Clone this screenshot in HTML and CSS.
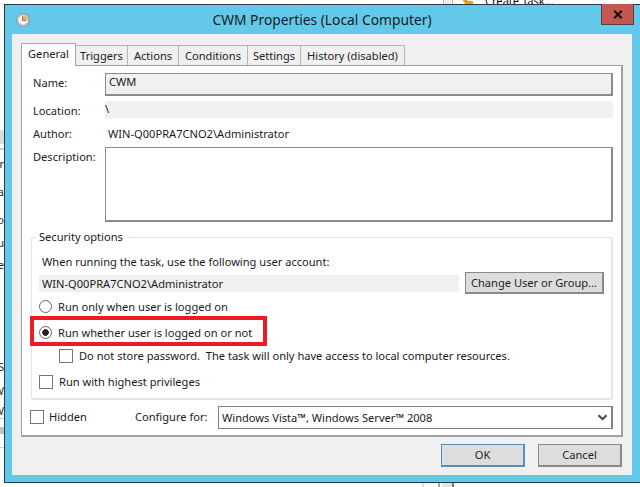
FILE: index.html
```html
<!DOCTYPE html>
<html lang="en">
<head>
<meta charset="utf-8">
<title>CWM Properties</title>
<link rel="stylesheet" href="styles.css">
</head>
<body>
<div class="desktop">
  <div class="behind-top">
    <span class="scroll-bit"></span>
    <svg class="task-icon" width="12" height="6" viewBox="0 0 12 6"><path d="M1 0h4l1 2h5v4H4L1 2z" fill="#e8a020"/></svg>
    <span class="behind-title">Create Task...</span>
  </div>
  <div class="behind-left">
    <i class="bl bl-band"></i><i class="bl bl-line1"></i>
    <b class="frag f1">r</b><b class="frag f2">a</b><b class="frag f3">o</b><b class="frag f4">u</b><b class="frag f5">e</b>
    <b class="frag f6">S</b><b class="frag f7">W</b><b class="frag f8">W</b>
    <i class="bl bl-line2"></i><i class="bl bl-dot"></i><i class="bl bl-line3"></i>
  </div>
  <div class="behind-bottom"><i></i><i></i><i></i><i></i></div>

  <div class="window">
    <header class="titlebar">
      <svg class="app-icon" width="14" height="14" viewBox="0 0 14 14">
        <circle cx="7" cy="7" r="6.3" fill="#c9ccd0" stroke="#8f949a"/>
        <circle cx="7" cy="7" r="4.4" fill="#f7f7f7"/>
        <path d="M7 7V2.6A4.4 4.4 0 0 1 11.4 7z" fill="#f0b050"/>
        <path d="M6.5 3.4V7.5H10" fill="none" stroke="#777" stroke-width="1"/>
      </svg>
      <span class="title">CWM Properties (Local Computer)</span>
      <div class="close">
        <svg width="10" height="9" viewBox="0 0 10 9"><path d="M1.2.8 8.8 8.2M8.8.8 1.2 8.2" stroke="#111" stroke-width="2.2" fill="none"/></svg>
      </div>
    </header>
    <main class="client">
      <nav class="tabs">
        <span class="tab active">General</span>
        <span class="tab t-triggers">Triggers</span>
        <span class="tab t-actions">Actions</span>
        <span class="tab t-conditions">Conditions</span>
        <span class="tab t-settings">Settings</span>
        <span class="tab t-history">History (disabled)</span>
      </nav>
      <section class="panel">
        <div class="form">
          <label class="lbl name-lbl">Name:</label>
          <div class="field name-field">CWM</div>
          <label class="lbl shifted">Location:</label>
          <div class="readonly">\</div>
          <label class="lbl shifted">Author:</label>
          <div class="author">WIN-Q00PRA7CNO2\Administrator</div>
          <label class="lbl desc-lbl">Description:</label>
          <div class="field desc-field"></div>
        </div>
        <div class="group">
          <span class="legend">Security options</span>
          <div class="account-label">When running the task, use the following user account:</div>
          <div class="account-row">
            <div class="account">WIN-Q00PRA7CNO2\Administrator</div>
            <button class="btn change">Change User or Group...</button>
          </div>
          <div class="opt opt-1"><input type="radio" name="r"><span>Run only when user is logged on</span></div>
          <div class="opt opt-2"><input type="radio" name="r" checked><span>Run whether user is logged on or not</span></div>
          <div class="opt opt-3"><input type="checkbox"><span>Do not store password.&nbsp; The task will only have access to local computer resources.</span></div>
          <div class="opt opt-4"><input type="checkbox"><span>Run with highest privileges</span></div>
          <div class="highlight"></div>
        </div>
        <div class="bottom-row">
          <div class="hidden-opt"><input type="checkbox"><span>Hidden</span></div>
          <span class="cfg-label">Configure for:</span>
          <div class="select">
            <span>Windows Vista™, Windows Server™ 2008</span>
            <svg width="11" height="7" viewBox="0 0 11 7"><path d="M1.5 1.2 5.5 5.2 9.5 1.2" stroke="#444" stroke-width="2" fill="none"/></svg>
          </div>
        </div>
      </section>
      <footer class="actions">
        <button class="btn ok">OK</button>
        <button class="btn cancel">Cancel</button>
      </footer>
    </main>
  </div>
</div>
</body>
</html>
```
FILE: styles.css
```css
* { box-sizing: border-box; }
html, body { margin: 0; padding: 0; }
body {
  width: 640px; height: 487px; overflow: hidden; background: #fff;
  font-family: "Noto Sans", "Open Sans", sans-serif; font-size: 11.1px; color: #1a1a1a;
}
.desktop { position: relative; width: 640px; height: 487px; overflow: hidden; }

/* fragments of the window behind the dialog */
.behind-top { position: absolute; left: 443px; top: 0; width: 150px; height: 4px; overflow: hidden; }
.scroll-bit { position: absolute; left: 0; top: 0; width: 10px; height: 4px; background: #eee; border: 1px solid #bbb; border-width: 0 1px; }
.task-icon { position: absolute; left: 19px; top: -1px; }
.behind-title { position: absolute; left: 42px; top: -7px; white-space: nowrap; color: #111; }
.behind-left { position: absolute; left: 0; top: 0; width: 4px; height: 487px; overflow: hidden; }
.bl { position: absolute; left: 0; width: 4px; display: block; }
.bl-band { top: 130px; height: 14px; background: #dcdcdc; }
.bl-line1 { top: 148px; height: 2px; background: #ccc; }
.bl-line2 { top: 418px; height: 1px; background: #ccc; }
.bl-dot { top: 427px; height: 7px; background: #c4c4c4; }
.bl-line3 { top: 447px; height: 1px; background: #ccc; }
.frag { position: absolute; right: 0; font-weight: 400; line-height: 14px; color: #3a2a10; }
.f1 { top: 157px; } .f2 { top: 185px; } .f3 { top: 213px; } .f4 { top: 236px; } .f5 { top: 258px; }
.f6 { top: 360px; } .f7 { top: 384px; } .f8 { top: 404px; }
.behind-bottom { position: absolute; left: 422px; top: 483px; width: 34px; height: 4px; display: flex; background: #fff; }
.behind-bottom i { display: block; height: 4px; }
.behind-bottom i:nth-child(1) { width: 2px; background: #ddd; margin-right: 14px; }
.behind-bottom i:nth-child(2) { width: 2px; background: #aaa; margin-right: 2px; }
.behind-bottom i:nth-child(3) { width: 10px; background: #e4e4e4; }
.behind-bottom i:nth-child(4) { width: 2px; background: #777; }

/* dialog */
.window {
  position: absolute; left: 4px; top: 4px; width: 640px; height: 479px;
  background: #63c9ea; border: 1px solid #2c3a42;
}
.titlebar { position: relative; height: 29px; display: flex; align-items: center; justify-content: center; padding-right: 4px; }
.title { font-size: 13.8px; color: #1a1a1a; margin-top: -1px; }
.app-icon { position: absolute; left: 11px; top: 8px; }
.close {
  position: absolute; left: 596px; top: -1px; width: 33px; height: 21px;
  background: #c4574f; border: 1px solid #54413f; border-top: 0;
  display: flex; align-items: center; justify-content: center;
}
.client { width: 620px; height: 441px; margin-left: 7px; background: #f0f0f0; padding: 9px 0 0 9px; }

/* tabs */
.tabs { display: flex; align-items: flex-end; height: 22px; }
.tab {
  height: 20px; border: 1px solid #b4b4b4; border-left: 0; border-bottom: 0; background: #f0f0f0;
  display: flex; align-items: center; justify-content: center;
  color: #222; white-space: nowrap;
}
.tab.active {
  position: relative; z-index: 1; width: 55px; height: 23px; margin-bottom: -1px; background: #fff;
  border: 1px solid #a8a8a8; border-bottom: 0; padding: 0 0 3px;
}
.t-triggers { width: 52px; } .t-actions { width: 51px; } .t-conditions { width: 69px; }
.t-settings { width: 53px; } .t-history { width: 104px; }
.panel { width: 602px; height: 372px; background: #fff; border: 1px solid #a0a0a0; border-width: 1px 2px 2px 1px; }

.form {
  display: grid; grid-template-columns: 72px 508px; row-gap: 6px;
  padding: 7px 0 0 11px;
}
.lbl { display: flex; align-items: center; color: #222; }
.name-lbl { padding-bottom: 3px; }
.shifted { padding-top: 1px; }
.desc-lbl { align-items: flex-start; padding-top: 2px; }
.field { border: 1px solid #8c8c8c; border-width: 1px 2px 2px 1px; }
.name-field { height: 23px; margin-bottom: -1px; background: #f0f0f0; padding-left: 3px; line-height: 16px; }
.readonly { height: 17px; background: #f0f0f0; line-height: 15px; }
.author { height: 17px; line-height: 19px; padding-left: 3px; }
.desc-field { height: 75px; background: #fff; }

/* security group */
.group {
  position: relative; width: 582px; height: 163px; margin: 15px 0 0 9px;
  border: 1px solid #dfe5e8; border-width: 1px 2px 2px 1px; border-radius: 3px; padding-left: 7px;
}
.legend { position: absolute; left: 4px; top: -9px; padding: 0 3px 0 3px; background: #fff; line-height: 16px; }
.account-label { margin-top: 15px; height: 17px; line-height: 17px; padding-left: 3px; }
.account-row { display: flex; align-items: center; margin-top: 2px; height: 22px; }
.account { width: 420px; height: 17px; background: #f0f0f0; line-height: 17px; padding-left: 3px; }
.change { margin-left: 6px; width: 139px; height: 23px; }
.opt { display: flex; align-items: center; height: 17px; }
.opt span { white-space: nowrap; }
.opt input { margin: 0 6px 0 0; }
.opt-1 { margin-top: 4px; }
.opt-2 { margin-top: 9px; }
.opt-3 { margin-top: 6px; padding-left: 20px; }
.opt-4 { margin-top: 9px; }
.highlight {
  position: absolute; left: -2px; top: 78px; width: 237px; height: 30px;
  border: 4px solid #ed1c24; pointer-events: none;
}

/* controls */
input { appearance: none; -webkit-appearance: none; background: #fff; flex: none; }
input[type=checkbox] { width: 14px; height: 14px; border: 1px solid #777; }
input[type=radio] { width: 13px; height: 13px; border: 1px solid #666; border-radius: 50%; }
input[type=radio]:checked { background: radial-gradient(circle at center, #222 0 3px, #fff 3.6px); }

.bottom-row { display: flex; align-items: flex-start; margin-top: 6px; padding-left: 8px; height: 23px; }
.hidden-opt { display: flex; align-items: center; width: 105px; height: 22px; }
.hidden-opt input { margin: 0 5px 0 0; }
.hidden-opt span { margin-top: -2px; }
.cfg-label { width: 83px; line-height: 22px; }
.select {
  width: 395px; height: 23px; border: 1px solid #808080; border-width: 1px 2px 1px 1px; background: #fff;
  display: flex; align-items: center; justify-content: space-between; padding: 0 3px 0 3px; white-space: nowrap;
}

.btn {
  font: inherit; color: #222; height: 22px; padding: 0 0 1px; white-space: nowrap;
  background: #dddddd; border: 1px solid #8a8a8a; border-width: 1px 2px 2px 1px;
}
.actions { display: flex; gap: 13px; margin-top: 7px; width: 601px; justify-content: flex-end; }
.ok, .cancel { width: 84px; height: 23px; }
.ok { border-color: #4f8fc0; }
```
